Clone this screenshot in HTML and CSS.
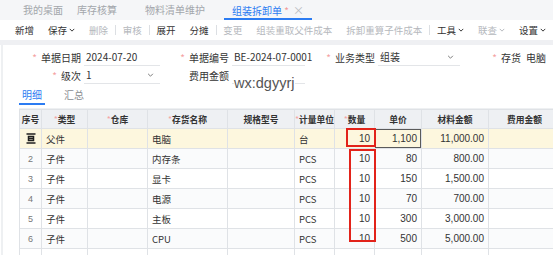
FILE: index.html
```html
<!DOCTYPE html>
<html lang="zh-CN">
<head>
    <meta charset="UTF-8">
    <title>组装拆卸单</title>
    <link rel="stylesheet" href="styles.css">
</head>
<body>
    <div class="tabbar">
        <span class="tab t1">我的桌面</span>
        <span class="tab t2">库存核算</span>
        <span class="tab t3">物料清单维护</span>
        <span class="tab t4 active">组装拆卸单 <i class="dirty">*</i><span class="close">×</span></span>
    </div>

    <div class="toolbar">
        <span class="btn first">新增</span>
        <span class="btn">保存<svg class="chev" viewBox="0 0 8 5"><polyline points="1,1 4,4 7,1"/></svg></span>
        <span class="btn off">删除</span>
        <span class="sep"></span>
        <span class="btn off">审核</span>
        <span class="sep"></span>
        <span class="btn">展开</span>
        <span class="btn">分摊</span>
        <span class="sep"></span>
        <span class="btn off">变更</span>
        <span class="btn off">组装重取父件成本</span>
        <span class="btn off">拆卸重算子件成本</span>
        <span class="sep"></span>
        <span class="btn">工具<svg class="chev" viewBox="0 0 8 5"><polyline points="1,1 4,4 7,1"/></svg></span>
        <span class="btn off">联查<svg class="chev" viewBox="0 0 8 5"><polyline points="1,1 4,4 7,1"/></svg></span>
        <span class="btn">设置<svg class="chev" viewBox="0 0 8 5"><polyline points="1,1 4,4 7,1"/></svg></span>
    </div>

    <div class="content">
        <div class="form">
            <div class="frow">
                <div class="fld">
                    <span class="lbl w1 req">单据日期</span>
                    <span class="inp i1">2024-07-20</span>
                </div>
                <div class="fld">
                    <span class="lbl w2 req">单据编号</span>
                    <span class="inp i2">BE-2024-07-0001</span>
                </div>
                <div class="fld">
                    <span class="lbl w3 req">业务类型</span>
                    <span class="inp i3">组装<svg class="dd" viewBox="0 0 8 5"><polyline points="1,1 4,4 7,1"/></svg></span>
                </div>
                <div class="fld">
                    <span class="lbl w4 req">存货</span>
                    <span class="inp i4">电脑</span>
                </div>
            </div>
            <div class="frow">
                <div class="fld">
                    <span class="lbl w1 req">级次</span>
                    <span class="inp i1">1<svg class="dd" viewBox="0 0 8 5"><polyline points="1,1 4,4 7,1"/></svg></span>
                </div>
                <div class="fld">
                    <span class="lbl w2">费用金额</span>
                    <span class="inp i2 mark-host"><span class="mark">wx:dgyyrj</span></span>
                </div>
            </div>
        </div>

        <div class="subtabs">
            <span class="sub active">明细</span>
            <span class="sub">汇总</span>
        </div>

        <div class="grid">
            <table>
                <colgroup>
                    <col style="width:22px"><col style="width:46px"><col style="width:60px"><col style="width:80px"><col style="width:67px">
                    <col style="width:40px"><col style="width:40px"><col style="width:47px"><col style="width:67px"><col style="width:72px">
                </colgroup>
                <thead>
                    <tr>
                        <th>序号</th>
                        <th><i class="star">*</i>类型</th>
                        <th><i class="star">*</i>仓库</th>
                        <th><i class="star">*</i>存货名称</th>
                        <th>规格型号</th>
                        <th><i class="star">*</i>计量单位</th>
                        <th><i class="star">*</i>数量</th>
                        <th>单价</th>
                        <th>材料金额</th>
                        <th>费用金额</th>
                    </tr>
                </thead>
                <tbody>
                    <tr class="parent">
                        <td class="no"><svg class="pico" viewBox="0 0 10 11"><path d="M0.5 1h9M2.5 3.5h5v4h-5zM2.5 5.5h5M0.5 10h9"/></svg></td>
                        <td>父件</td><td></td><td>电脑</td><td></td><td>台</td>
                        <td class="num">10</td><td class="num sel">1,100</td><td class="num">11,000.00</td><td></td>
                    </tr>
                    <tr>
                        <td class="no">2</td><td>子件</td><td></td><td>内存条</td><td></td><td>PCS</td>
                        <td class="num">10</td><td class="num">80</td><td class="num">800.00</td><td></td>
                    </tr>
                    <tr>
                        <td class="no">3</td><td>子件</td><td></td><td>显卡</td><td></td><td>PCS</td>
                        <td class="num">10</td><td class="num">150</td><td class="num">1,500.00</td><td></td>
                    </tr>
                    <tr>
                        <td class="no">4</td><td>子件</td><td></td><td>电源</td><td></td><td>PCS</td>
                        <td class="num">10</td><td class="num">70</td><td class="num">700.00</td><td></td>
                    </tr>
                    <tr>
                        <td class="no">5</td><td>子件</td><td></td><td>主板</td><td></td><td>PCS</td>
                        <td class="num">10</td><td class="num">300</td><td class="num">3,000.00</td><td></td>
                    </tr>
                    <tr>
                        <td class="no">6</td><td>子件</td><td></td><td>CPU</td><td></td><td>PCS</td>
                        <td class="num">10</td><td class="num">500</td><td class="num">5,000.00</td><td></td>
                    </tr>
                    <tr>
                        <td class="no"></td><td></td><td></td><td></td><td></td><td></td><td></td><td></td><td></td><td></td>
                    </tr>
                </tbody>
            </table>
            <div class="redbox box1"></div>
            <div class="redbox box2"></div>
        </div>
    </div>
</body>
</html>
```

FILE: styles.css
```css
body { margin: 0; width: 553px; height: 255px; overflow: hidden; background: #fff; color: #333;
       font-family: "Noto Sans CJK SC", "Liberation Sans", sans-serif; font-size: 10px; }

.tabbar { display: flex; align-items: center; height: 20px; padding-left: 23px; background: #f5f6f8; color: #a3a6ab; box-sizing: border-box; }
.tab { line-height: 20px; height: 20px; box-sizing: border-box; }
.t2 { margin-left: 14px; }
.t3 { margin-left: 28px; }
.t4 { margin-left: 19px; padding: 0 8px; }
.tab.active { color: #2c7cf2; border-bottom: 2px solid #2c7cf2; }
.dirty { font-style: normal; color: #f29a9a; }
.close { color: #b8bbc0; margin-left: 4px; font-size: 11px; }

.toolbar { display: flex; align-items: center; height: 20px; padding-left: 8px; background: #fff; border-bottom: 5px solid #eff0f3; font-size: 9.5px; }
.btn { display: flex; align-items: center; padding: 0 7px; color: #333; white-space: nowrap; }
.btn.off { color: #b5b8bd; }
.sep { width: 1px; height: 10px; background: #dcdfe3; }
.chev { width: 6px; height: 4px; margin-left: 2px; fill: none; stroke: currentColor; stroke-width: 1.3; }

.content { border-left: 2px solid #eef0f2; margin-left: 1px; height: 210px; }

.form { padding-top: 3px; }
.frow { display: flex; height: 18px; }
.fld { display: flex; align-items: center; }
.lbl { text-align: right; padding-right: 3px; box-sizing: border-box; color: #333; white-space: nowrap; }
.req::before { content: "*"; color: #f5a3a3; margin-right: 4px; }
.w1 { width: 81px; }
.w2 { width: 72px; }
.w3 { width: 73px; }
.w4 { width: 64px; }
.inp { display: flex; align-items: center; height: 17px; border-bottom: 1px solid #e3e5e8; padding-left: 2px; box-sizing: border-box; white-space: nowrap; }
.i1 { width: 76px; }
.i2 { width: 73px; }
.i3 { width: 82px; }
.i4 { width: 30px; border-bottom: none; }
.dd { width: 7px; height: 4px; margin-left: auto; margin-right: 6px; fill: none; stroke: #777; stroke-width: 1.2; }

.mark-host { position: relative; }
.mark { position: absolute; left: 2px; top: 9px; padding-right: 1px; background: #fff; color: #555;
        font-family: "Liberation Sans", sans-serif; font-size: 14.5px; line-height: 15px; }

.subtabs { display: flex; height: 22px; margin: 2px 0 0 16px; border-bottom: 1px solid #eef0f2; }
.sub { padding: 0 3px; margin-right: 16px; line-height: 18px; height: 19px; box-sizing: border-box; color: #8a8d92; font-size: 10px; }
.sub.active { color: #2c7cf2; border-bottom: 2px solid #2c7cf2; }

.grid { position: relative; margin: 0 0 0 16px; }
table { border-collapse: collapse; table-layout: fixed; width: 541px; }
th, td { border: 1px solid #dfe2e6; padding: 0 4px; white-space: nowrap; overflow: hidden; }
th { height: 18px; padding: 0; background: #eef0f3; font-weight: bold; color: #333; text-align: center; font-size: 8.75px; }
td { height: 19px; color: #333; font-size: 9.5px; }
.star { font-style: normal; color: #f5a3a3; font-weight: normal; margin-right: 0; }
td.no { text-align: center; color: #777; padding: 0; font-family: "Liberation Sans", sans-serif; font-size: 9px; }
td.num { text-align: right; font-family: "Liberation Sans", sans-serif; font-size: 10px; padding-right: 4px; }
tbody tr:nth-child(even) td { background: #fafbfc; }
tr.parent td { background: #fdf7de; }
td.sel { box-shadow: inset 0 0 0 1px #5a5a5a; }
.pico { width: 10px; height: 11px; vertical-align: middle; fill: none; stroke: #1f1f1f; stroke-width: 1.5; }

.redbox { position: absolute; border: 2px solid #e2231a; box-sizing: border-box; }
.box1 { left: 327px; top: 19px; width: 30px; height: 19px; }
.box2 { left: 330px; top: 40px; width: 27px; height: 93px; }
```
